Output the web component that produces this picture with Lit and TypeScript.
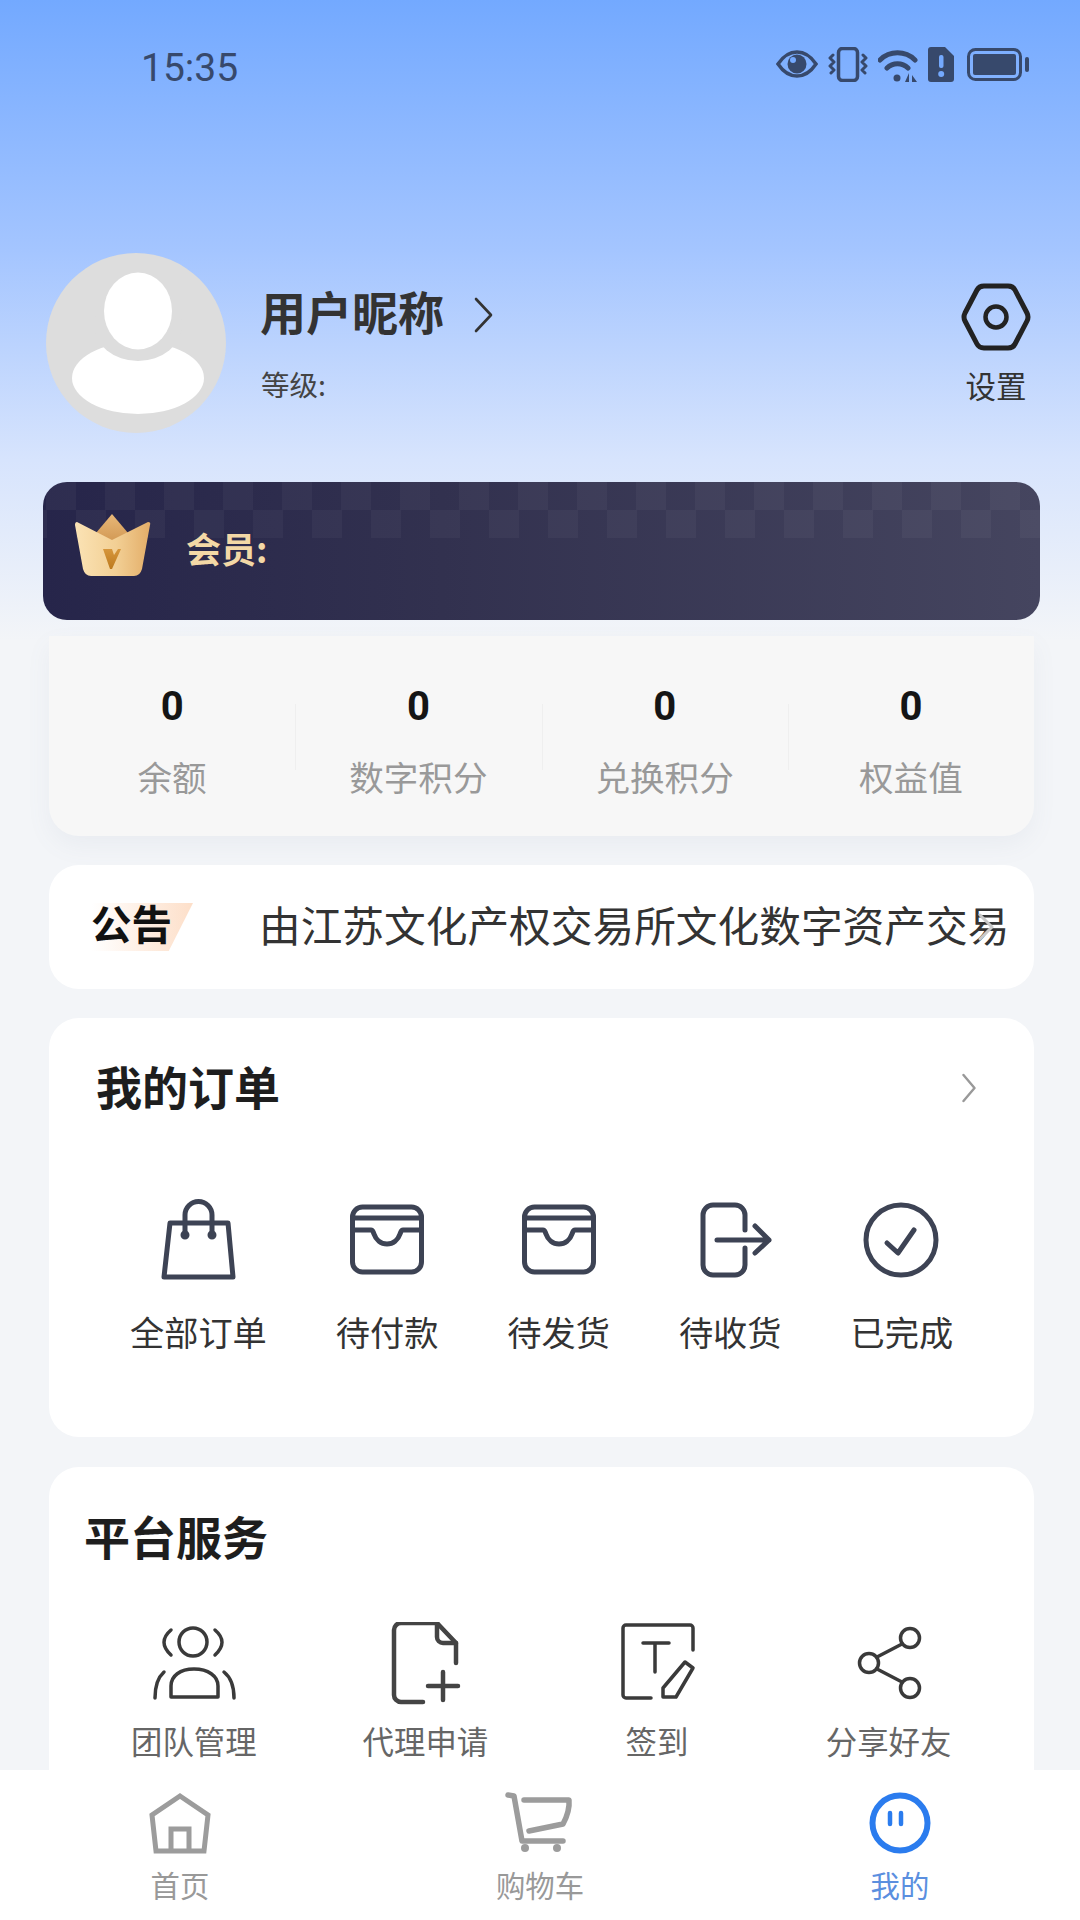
import { LitElement, html, css } from "lit";
import { customElement } from "lit/decorators.js";

const orders = [
  { label: "全部订单", icon: html`<svg class="ico dark" viewBox="0 0 84 84" fill="none" stroke-linecap="round" stroke-linejoin="round"><path d="M14 25H72L77 79H8Z"/><path d="M29 37V17a13.5 13.5 0 0 1 27 0V37"/><circle cx="29" cy="37" r="2" /><circle cx="56" cy="37" r="2"/></svg>` },
  { label: "待付款", icon: html`<svg class="ico dark" viewBox="0 0 84 84" fill="none" stroke-linecap="round" stroke-linejoin="round"><rect x="7.5" y="9" width="69" height="65" rx="10"/><path d="M7.5 20H76.5"/><path d="M7.5 32H26C28 32 28 34 29 36C31 42 36 46 42 46S53 42 55 36C56 34 56 32 58 32H76.5"/></svg>` },
  { label: "待发货", icon: html`<svg class="ico dark" viewBox="0 0 84 84" fill="none" stroke-linecap="round" stroke-linejoin="round"><rect x="7.5" y="9" width="69" height="65" rx="10"/><path d="M7.5 20H76.5"/><path d="M7.5 32H26C28 32 28 34 29 36C31 42 36 46 42 46S53 42 55 36C56 34 56 32 58 32H76.5"/></svg>` },
  { label: "待收货", icon: html`<svg class="ico dark" viewBox="0 0 84 84" fill="none" stroke-linecap="round" stroke-linejoin="round"><path d="M57 32V17a10 10 0 0 0-10-10H25a10 10 0 0 0-10 10V67a10 10 0 0 0 10 10H47a10 10 0 0 0 10-10V50"/><path d="M29 42H81M67 28L81 42L67 55"/></svg>` },
  { label: "已完成", icon: html`<svg class="ico dark" viewBox="0 0 84 84" fill="none" stroke-linecap="round" stroke-linejoin="round"><circle cx="41" cy="42" r="35"/><path d="M27 45L38 55L54 32"/></svg>` },
];

const services = [
  { label: "团队管理", icon: html`<svg class="ico line" viewBox="0 0 84 84" fill="none" stroke-linecap="round" stroke-linejoin="round"><ellipse cx="41" cy="20" rx="14" ry="14"/><path d="M19 8Q5 20 19 33M63 8Q77 20 63 33"/><path d="M19 75V64C19 54 28 47 42 47S66 54 66 64V75Z"/><path d="M12 50Q3 58 3 76M72 50Q82 58 82 76"/></svg>` },
  { label: "代理申请", icon: html`<svg class="ico line thick" viewBox="0 0 84 84" fill="none" stroke-linecap="round" stroke-linejoin="round"><path d="M40 80H18a7 7 0 0 1-7-7V8a7 7 0 0 1 7-7H54L73 21V41"/><path d="M54 1V15a6 6 0 0 0 6 6H73"/><path d="M45 64H75M60 50V78"/></svg>` },
  { label: "签到", icon: html`<svg class="ico line" viewBox="0 0 84 84" fill="none" stroke-linecap="round" stroke-linejoin="round"><path d="M78 28V6a3 3 0 0 0-3-3H11a3 3 0 0 0-3 3V73a3 3 0 0 0 3 3H36"/><path d="M28 21H54M40 21V50"/><path d="M70 40L78 46L61 75H48V66Z"/></svg>` },
  { label: "分享好友", icon: html`<svg class="ico line" viewBox="0 0 84 84" fill="none" stroke-linecap="round" stroke-linejoin="round"><circle cx="63" cy="16" r="9.5"/><circle cx="22" cy="41" r="9.5"/><circle cx="63" cy="66" r="9.5"/><path d="M30 35L55 22M30 47L55 60"/></svg>` },
];

const stats = ["余额", "数字积分", "兑换积分", "权益值"];

@customElement("app-root")
export class AppRoot extends LitElement {
  static styles = css`
    :host { display: block; width: 1080px; height: 1920px; overflow: hidden; font-family: "Noto Sans CJK SC", "Noto Sans", sans-serif; }
    .page { width: 1080px; height: 1920px; display: flex; flex-direction: column; background: #f3f5f8; }
    .scroll { flex: 1; min-height: 0; overflow: hidden; background: linear-gradient(180deg, #73a9ff 0, #a4c5ff 250px, #d7e4fd 460px, #f3f5f8 640px); }
    .status { height: 35px; padding: 47px 50px 0 141px; display: flex; align-items: center; gap: 10px; }
    .time { font-family: Roboto, sans-serif; font-size: 39px; line-height: 40px; color: #37496c; margin-right: auto; padding-top: 6px; }
    .status svg { height: 35px; display: block; }
    .profile { display: flex; margin-top: 171px; padding: 0 49px 0 46px; height: 180px; }
    .avatar { width: 180px; height: 180px; flex: none; }
    .info { margin-left: 34px; padding-top: 27px; }
    .name { display: flex; align-items: center; height: 60px; font-size: 46px; line-height: 60px; font-weight: 700; color: #333; }
    .name svg { width: 20px; height: 36px; margin-left: 30px; margin-top: 9px; }
    .level { margin: 26px 0 0 1px; font-size: 28.5px; line-height: 36px; color: #444; }
    .settings { margin-left: auto; padding-top: 29px; width: 70px; display: flex; flex-direction: column; align-items: center; }
    .settings svg { width: 70px; height: 70px; }
    .settings span { margin-top: 15px; font-size: 30.5px; line-height: 36px; color: #333; white-space: nowrap; }
    .member { margin: 49px 40px 0 43px; height: 138px; border-radius: 24px; display: flex; align-items: flex-start;
      background:
        repeating-conic-gradient(rgba(255,255,255,.035) 0 25%, transparent 0 50%) 33px 0 / 59px 56px repeat-x,
        linear-gradient(90deg, #26254a 0, #32314f 40%, #45455f 100%); }
    .crown { width: 78px; height: 64px; margin: 31px 0 0 31px; flex: none; }
    .member span { margin: 43px 0 0 34px; font-size: 35px; line-height: 46px; font-weight: 700; color: #f3d8a6; }
    .stats { margin: 16px 46px 0 49px; height: 200px; display: grid; grid-template-columns: repeat(4, 1fr); background: #f7f7f7; border-radius: 0 0 30px 30px; box-shadow: 0 10px 24px rgba(120,130,150,.07); }
    .stat { position: relative; text-align: center; padding-top: 46px; }
    .stat + .stat::before { content: ""; position: absolute; left: 0; top: 68px; height: 66px; width: 1px; background: #efefef; }
    .num { font-family: Roboto, sans-serif; font-weight: 700; font-size: 40px; line-height: 50px; color: #151515; }
    .cap { margin-top: 20px; font-size: 34.6px; line-height: 48px; color: #999; }
    .card { margin: 29px 46px 0 49px; background: #fff; border-radius: 30px; }
    .notice { position: relative; height: 124px; padding: 0 23px 0 43px; display: flex; align-items: center; }
    .tag { position: relative; flex: none; width: 101px; height: 48px; }
    .tag::before { content: ""; position: absolute; inset: 0; background: linear-gradient(90deg, #fff 0, #fddfc9 100%); clip-path: polygon(0 0, 100% 0, 76% 100%, 0 100%); }
    .tag span { position: absolute; left: -1px; top: -6px; font-size: 40.5px; line-height: 52px; font-weight: 700; color: #111; white-space: nowrap; }
    .ticker { flex: 1; margin: -7px 0 0 66px; white-space: nowrap; font-size: 41.7px; line-height: 56px; color: #333; }
    .ghost { position: absolute; left: 929px; top: 48px; width: 16px; height: 28px; }
    .orders { height: 419px; }
    .head { display: flex; align-items: center; justify-content: space-between; height: 60px; padding: 38px 58px 0 47px; font-size: 46px; line-height: 60px; font-weight: 700; color: #1e1e1e; }
    .head svg { width: 14px; height: 30px; margin-top: 6px; }
    .orders .head { padding-top: 37px; }
    .order-row { display: flex; gap: 69px; margin-top: 83px; padding-left: 81px; }
    .order { display: flex; flex-direction: column; align-items: center; }
    .order span { margin-top: 27px; font-size: 34.2px; line-height: 44px; color: #333; white-space: nowrap; }
    .ico { width: 84px; height: 84px; flex: none; display: block; }
    .dark { stroke: #3d4354; stroke-width: 5; }
    .line { stroke: #3a3a3a; stroke-width: 3.5; }
    .thick { stroke: #444; stroke-width: 4.5; }
    .services { margin-top: 30px; height: 400px; }
    .services .head { padding-left: 35px; }
    .svc-row { display: grid; grid-template-columns: repeat(4, 231.6px); margin-top: 57px; padding-left: 29px; }
    .svc { display: flex; flex-direction: column; align-items: center; }
    .svc span { margin-top: 15px; font-size: 31.4px; line-height: 40px; color: #666; white-space: nowrap; }
    .tabs { flex: none; height: 150px; background: #fff; display: grid; grid-template-columns: repeat(3, 360px); }
    .tab { display: flex; flex-direction: column; align-items: center; padding-top: 18px; }
    .tab svg { width: 72px; height: 72px; display: block; }
    .tab span { margin-top: 6px; font-size: 29.4px; line-height: 36px; color: #999; }
    .tab.on span { color: #5b8fdf; }
  `;

  render() {
    return html`
      <div class="page">
        <div class="scroll">
          <div class="status">
            <span class="time">15:35</span>
            <svg width="42" viewBox="0 0 42 35" fill="none"><path d="M2 17C8 8 14 5 21 5S34 8 40 17C34 26 28 29 21 29S8 26 2 17Z" stroke="#37496c" stroke-width="3.5"/><circle cx="21" cy="17" r="9.5" fill="#37496c"/><circle cx="17" cy="13" r="3" fill="#74a9fe"/></svg>
            <svg width="40" viewBox="0 0 40 35" fill="none" stroke="#37496c" stroke-linecap="round" stroke-linejoin="round"><rect x="10.5" y="1.5" width="19" height="32" rx="4" stroke-width="3.5"/><path d="M5 8L2 11L6 15L2 19L6 23L3 26M35 8L38 11L34 15L38 19L34 23L37 26" stroke-width="3"/></svg>
            <svg width="40" viewBox="0 0 40 35" fill="none" stroke="#37496c" stroke-linecap="round"><path d="M2 13A25 25 0 0 1 37 13M9 21A15 15 0 0 1 30 21" stroke-width="5"/><circle cx="19" cy="31" r="3.5" fill="#37496c" stroke="none"/><path d="M31 26V35H27ZM34 28V35H39Z" fill="#37496c" stroke="none"/></svg>
            <svg width="26" viewBox="0 0 26 35"><path d="M3 0H17L26 9V32a3 3 0 0 1-3 3H3a3 3 0 0 1-3-3V3a3 3 0 0 1 3-3Z" fill="#37496c"/><rect x="11" y="8" width="4.5" height="13" rx="2" fill="#74a9fe"/><circle cx="13.2" cy="27" r="3" fill="#74a9fe"/></svg>
            <svg width="66" viewBox="0 0 66 35" fill="none"><rect x="4.5" y="2.5" width="52" height="30" rx="7" stroke="#37496c" stroke-width="3"/><rect x="9" y="7" width="43" height="21" rx="2" fill="#37496c"/><rect x="61" y="10" width="4" height="15" rx="2" fill="#37496c"/></svg>
          </div>

          <div class="profile">
            <svg class="avatar" viewBox="0 0 180 180"><circle cx="90" cy="90" r="90" fill="#ddd"/><ellipse cx="92" cy="125" rx="66" ry="36" fill="#fff"/><ellipse cx="92" cy="72" rx="44" ry="36" fill="#ddd"/><ellipse cx="92" cy="58" rx="34" ry="38.5" fill="#fff"/></svg>
            <div class="info">
              <div class="name">用户昵称<svg viewBox="0 0 20 36" fill="none" stroke="#333" stroke-width="2.6" stroke-linecap="round" stroke-linejoin="round"><path d="M2 2L17 18L2 34"/></svg></div>
              <div class="level">等级:</div>
            </div>
            <div class="settings">
              <svg viewBox="0 0 70 70" fill="none" stroke="#222" stroke-linejoin="round"><path d="M4 31L16 8Q18 4 23 4H47Q52 4 54 8L66 31Q68 35 66 39L54 62Q52 66 47 66H23Q18 66 16 62L4 39Q2 35 4 31Z" stroke-width="5"/><circle cx="35" cy="35" r="10.5" stroke-width="4.5"/></svg>
              <span>设置</span>
            </div>
          </div>

          <div class="member">
            <svg class="crown" viewBox="0 0 78 64">
              <defs>
                <linearGradient id="cg" x1="0" y1="0" x2="1" y2="0"><stop offset="0" stop-color="#fbe3b5"/><stop offset=".55" stop-color="#f2cf94"/><stop offset="1" stop-color="#e3ad68"/></linearGradient>
                <linearGradient id="cb" x1="0" y1="0" x2="0" y2="1"><stop offset="0" stop-color="#e8b878"/><stop offset="1" stop-color="#cf9550"/></linearGradient>
                <linearGradient id="cv" x1="0" y1="0" x2="0" y2="1"><stop offset="0" stop-color="#d6963c"/><stop offset="1" stop-color="#bd7a1e"/></linearGradient>
              </defs>
              <path d="M38 1L22 20L38 32L54 20Z" fill="url(#cb)"/>
              <path d="M3 9L38 27L74 9Q77 9 76 12L68 56Q66 63 60 63H17Q11 63 9 56L1 12Q1 9 3 9Z" fill="url(#cg)"/>
              <path d="M29 36H38L40 42L44 36H47L38 56H36Z" fill="url(#cv)"/>
            </svg>
            <span>会员:</span>
          </div>

          <div class="stats">
            ${stats.map((s) => html`<div class="stat"><div class="num">0</div><div class="cap">${s}</div></div>`)}
          </div>

          <div class="card notice">
            <div class="tag"><span>公告</span></div>
            <div class="ticker">由江苏文化产权交易所文化数字资产交易</div>
            <svg class="ghost" viewBox="0 0 16 28" fill="none" stroke="#c8c8c8" stroke-width="3" stroke-linecap="round" stroke-linejoin="round"><path d="M2 2L14 14L2 26"/></svg>
          </div>

          <div class="card orders">
            <div class="head">我的订单<svg viewBox="0 0 14 30" fill="none" stroke="#999" stroke-width="2.4" stroke-linecap="round" stroke-linejoin="round"><path d="M1.5 2L12.5 15L1.5 28"/></svg></div>
            <div class="order-row">
              ${orders.map((o) => html`<div class="order">${o.icon}<span>${o.label}</span></div>`)}
            </div>
          </div>

          <div class="card services">
            <div class="head">平台服务</div>
            <div class="svc-row">
              ${services.map((o) => html`<div class="svc">${o.icon}<span>${o.label}</span></div>`)}
            </div>
          </div>
        </div>

        <div class="tabs">
          <div class="tab">
            <svg viewBox="0 0 72 72" fill="none" stroke="#9c9c9c" stroke-width="5"><path d="M36 8L64 27L60 63H12L8 27Z" stroke-linejoin="miter"/><path d="M27 63V41H45V63"/></svg>
            <span>首页</span>
          </div>
          <div class="tab">
            <svg viewBox="0 0 72 72" fill="none" stroke="#9c9c9c" stroke-width="5.5" stroke-linecap="round" stroke-linejoin="round"><path d="M4 7L10 8L18 53H59"/><path d="M20 12H65Q66 23 59 36L25 43"/><circle cx="21" cy="60" r="4" fill="#9c9c9c" stroke="none"/><circle cx="53" cy="60" r="4" fill="#9c9c9c" stroke="none"/></svg>
            <span>购物车</span>
          </div>
          <div class="tab on">
            <svg viewBox="0 0 72 72" fill="none" stroke="#2b7cee" stroke-linecap="round"><circle cx="36" cy="35" r="27.5" stroke-width="6"/><path d="M26 25V36M37 25V36" stroke-width="4.5"/></svg>
            <span>我的</span>
          </div>
        </div>
      </div>
    `;
  }
}
